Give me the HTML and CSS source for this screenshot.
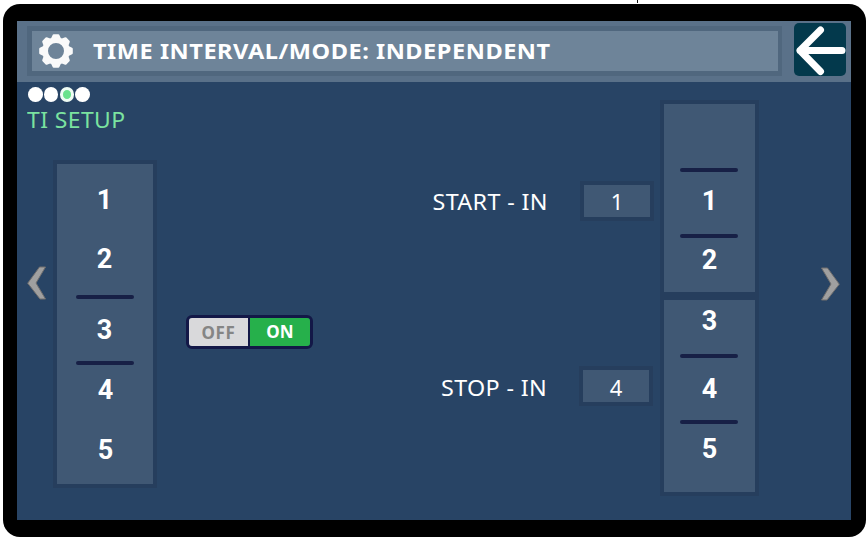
FILE: index.html
```html
<!DOCTYPE html>
<html lang="en">
<head>
<meta charset="utf-8">
<title>TI Setup</title>
<link rel="stylesheet" href="styles.css">
</head>
<body>
<main class="device">
  <div class="screen">
    <header class="header">
      <div class="title-bar">
        <svg class="gear" viewBox="-17 -17 34 34" width="34" height="34">
          <circle r="10.9" fill="none" stroke="#fafafa" stroke-width="5.8"/>
          <g fill="#fafafa">
            <path id="tooth" d="M-5-12.5 L-3.6-15.6Q-3.2-16.8-2.2-16.8H2.2Q3.2-16.8 3.6-15.6L5-12.5Z"/>
            <use href="#tooth" transform="rotate(45)"/><use href="#tooth" transform="rotate(90)"/>
            <use href="#tooth" transform="rotate(135)"/><use href="#tooth" transform="rotate(180)"/>
            <use href="#tooth" transform="rotate(225)"/><use href="#tooth" transform="rotate(270)"/>
            <use href="#tooth" transform="rotate(315)"/>
          </g>
        </svg>
        <h1 class="title">TIME INTERVAL/MODE: INDEPENDENT</h1>
      </div>
      <button class="back" aria-label="Back">
        <svg viewBox="0 0 52 53" width="52" height="53" fill="none" stroke="#fff" stroke-width="7" stroke-linecap="round" stroke-linejoin="round"><path d="M26.5 7 6 27.5 26.5 48.5M6 27.5H48"/></svg>
      </button>
    </header>
    <div class="content">
      <section class="left">
        <div class="dots"><i></i><i></i><i class="current"></i><i></i></div>
        <h2 class="section-title">TI SETUP</h2>
        <div class="controls">
          <svg class="chevron" viewBox="0 0 20 34" width="20" height="34"><path class="edge" d="M12.5 1H18.5L9 17 18.5 33H13L0.7 17.2Z"/></svg>
          <div class="picker main-picker">
            <b>1</b><b>2</b><hr><b>3</b><hr><b class="shift">4</b><b class="shift">5</b>
          </div>
          <div class="toggle"><span class="off">OFF</span><span class="on">ON</span></div>
        </div>
      </section>
      <section class="fields">
        <div class="field start"><span class="label">START - IN</span><span class="value">1</span></div>
        <div class="field stop"><span class="label">STOP - IN</span><span class="value">4</span></div>
      </section>
      <section class="range">
        <div class="picker start-picker"><hr><b>1</b><hr><b>2</b></div>
        <div class="picker stop-picker"><b>3</b><hr><b>4</b><hr><b>5</b></div>
      </section>
      <svg class="chevron next" viewBox="0 0 20 34" width="20" height="34"><path class="edge" d="M7.5 1H1.5L11 17 1.5 33H7L19.3 17.2Z"/></svg>
    </div>
  </div>
</main>
<i class="guide"></i>
</body>
</html>
```

FILE: styles.css
```css
* { box-sizing: border-box; }
body { margin: 0; width: 866px; height: 537px; overflow: hidden; background: #fff; font-family: "Noto Sans", sans-serif; color: #fff; }
h1, h2 { margin: 0; font-size: inherit; }
.device { width: 863px; height: 533px; margin: 4px 0 0 3px; padding: 17px 15px 16px 14px; background: #000; border-radius: 17px; }
.screen { height: 499px; width: 834px; background: #284465; }
.header { display: flex; height: 61px; padding: 2px 5px 0 10px; background: #5a7189; }
.title-bar { display: flex; align-items: center; width: 755px; height: 50px; margin-top: 3px; padding-left: 7px; border: 5px solid #50677e; border-right-width: 4px; background: #6e8499; }
.gear { margin-top: -1px; }
.title { margin: -2px 0 0 20px; font-size: 22px; line-height: 30px; font-weight: 700; letter-spacing: 0.5px; white-space: nowrap; transform: scaleX(1.07); transform-origin: left; }
.back { width: 52px; height: 53px; margin-left: auto; padding: 0; border: 0; border-radius: 5px; background: #03394c; }
.back svg { display: block; }
.content { display: flex; height: 438px; }
.left { width: 360px; padding: 5px 0 0 10px; }
.dots { display: flex; gap: 1.3px; height: 15px; padding-left: 1px; }
.dots i { width: 14.5px; height: 15px; border-radius: 50%; background: #fff; }
.dots .current { border: 3px solid #effcf4; background: #69e28c; }
.section-title { margin-top: 3px; color: #7be3a0; font-size: 21.5px; font-weight: 400; line-height: 30px; letter-spacing: 0.4px; white-space: nowrap; transform: scaleX(1.065); transform-origin: left; }
.controls { display: flex; margin-top: 25px; }
.chevron { flex: none; margin-top: 106px; }
.edge { fill: #a0a0a0; stroke: #716f6e; stroke-width: 1; }
.picker { display: flex; flex-direction: column; align-items: center; border: 4px solid #263e5d; background: #405874; font-family: Roboto, sans-serif; font-size: 27px; line-height: 30px; }
.picker b { height: 30px; }
.picker hr { flex: none; width: 58px; height: 4px; margin: 0; border: 0; border-radius: 2px; background: #172046; }
.main-picker { width: 104px; height: 328px; margin-left: 6px; padding: 21px 1px 0 0; }
.main-picker b:nth-of-type(2) { margin-top: 29px; }
.main-picker hr:nth-of-type(1) { margin-top: 21px; }
.main-picker b:nth-of-type(3) { margin-top: 16px; }
.main-picker hr:nth-of-type(2) { margin-top: 16px; }
.main-picker .shift { padding-left: 2px; margin-top: 10px; }
.main-picker .shift + .shift { margin-top: 30px; }
.toggle { display: flex; width: 127px; height: 34px; margin: 155px 0 0 29px; border: 3px solid #131847; border-radius: 6px; overflow: hidden; font-weight: 700; line-height: 28px; text-align: center; }
.off { width: 60px; border-right: 1px solid #131847; background: #d9d9db; color: #858585; font-size: 17px; letter-spacing: 0.7px; padding-top: 1px; }
.on { flex: 1; border-left: 1px solid #131847; background: #26b04b; font-size: 17px; }
.fields { width: 283px; padding-top: 99px; }
.field { display: flex; align-items: center; justify-content: flex-end; padding-right: 6px; font-size: 22px; line-height: 32px; }
.label { letter-spacing: 0.35px; transform: scaleX(1.06); transform-origin: right; }
.value { width: 74px; height: 40px; margin-left: 32px; border: 4px solid #263e5d; background: #405874; text-align: center; }
.stop { margin-top: 145px; padding-right: 7px; }
.stop .label { padding-top: 2px; }
.stop .value { line-height: 34px; }
.range { width: 99px; padding-top: 18px; }
.picker.start-picker, .picker.stop-picker { padding-right: 2px; }
.range b { padding-left: 2px; }
.start-picker { height: 196px; padding-top: 64px; }
.start-picker b:nth-of-type(1) { margin-top: 14px; }
.start-picker hr:nth-of-type(2) { margin-top: 18px; }
.start-picker b:nth-of-type(2) { margin-top: 7px; }
.stop-picker { height: 200px; padding-top: 6px; }
.stop-picker hr:nth-of-type(1) { margin-top: 18px; }
.stop-picker b:nth-of-type(2) { margin-top: 16px; }
.stop-picker hr:nth-of-type(2) { margin-top: 16px; }
.stop-picker b:nth-of-type(3) { margin-top: 10px; }
.next { margin: 185px 0 0 61px; }
.guide { position: absolute; top: 0; left: 637px; width: 1px; height: 3px; background: #111; }
```
